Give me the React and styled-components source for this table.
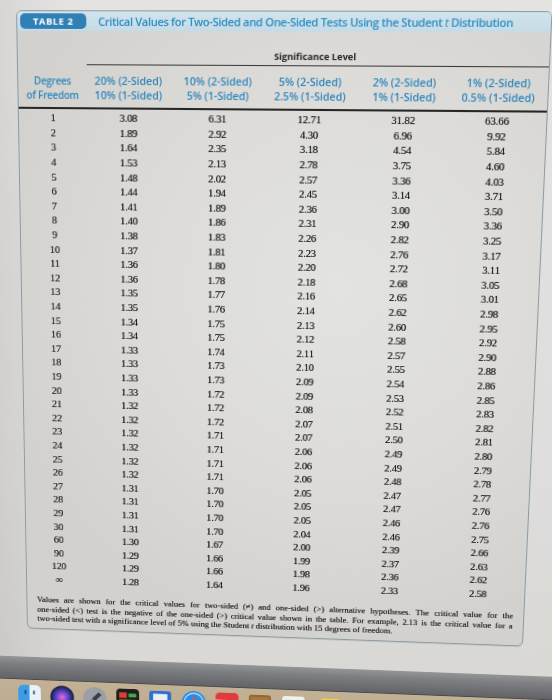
import React from 'react';
import styled, { createGlobalStyle } from 'styled-components';

/* ---------- projective mapping (photo perspective) ---------- */
function adj(m) {
  return [
    m[4] * m[8] - m[5] * m[7], m[2] * m[7] - m[1] * m[8], m[1] * m[5] - m[2] * m[4],
    m[5] * m[6] - m[3] * m[8], m[0] * m[8] - m[2] * m[6], m[2] * m[3] - m[0] * m[5],
    m[3] * m[7] - m[4] * m[6], m[1] * m[6] - m[0] * m[7], m[0] * m[4] - m[1] * m[3],
  ];
}
function mulMM(a, b) {
  const c = [];
  for (let i = 0; i < 3; i++)
    for (let j = 0; j < 3; j++) {
      let s = 0;
      for (let k = 0; k < 3; k++) s += a[3 * i + k] * b[3 * k + j];
      c[3 * i + j] = s;
    }
  return c;
}
function mulMV(m, v) {
  return [
    m[0] * v[0] + m[1] * v[1] + m[2] * v[2],
    m[3] * v[0] + m[4] * v[1] + m[5] * v[2],
    m[6] * v[0] + m[7] * v[1] + m[8] * v[2],
  ];
}
function basis(p) {
  const m = [p[0][0], p[1][0], p[2][0], p[0][1], p[1][1], p[2][1], 1, 1, 1];
  const v = mulMV(adj(m), [p[3][0], p[3][1], 1]);
  return mulMM(m, [v[0], 0, 0, 0, v[1], 0, 0, 0, v[2]]);
}
function homography(src, dst) {
  const t = mulMM(basis(dst), adj(basis(src)));
  const n = t.map((x) => x / t[8]);
  return `matrix3d(${[n[0], n[3], 0, n[6], n[1], n[4], 0, n[7], 0, 0, 1, 0, n[2], n[5], 0, n[8]].join(',')})`;
}

const SRC = [[53, 119.3], [497, 119.3], [53, 542.7], [497, 542.7]];
const DST = [[53, 118.5], [497, 122], [58.5, 527], [480, 540]];
const MATRIX = homography(SRC, DST);
const SHIFT_X = 40;

/* ---------- data ---------- */
const DF = [...Array.from({ length: 30 }, (_, i) => String(i + 1)), '60', '90', '120', '∞'];
const COLS = [
  '3.08 1.89 1.64 1.53 1.48 1.44 1.41 1.40 1.38 1.37 1.36 1.36 1.35 1.35 1.34 1.34 1.33 1.33 1.33 1.33 1.32 1.32 1.32 1.32 1.32 1.32 1.31 1.31 1.31 1.31 1.30 1.29 1.29 1.28',
  '6.31 2.92 2.35 2.13 2.02 1.94 1.89 1.86 1.83 1.81 1.80 1.78 1.77 1.76 1.75 1.75 1.74 1.73 1.73 1.72 1.72 1.72 1.71 1.71 1.71 1.71 1.70 1.70 1.70 1.70 1.67 1.66 1.66 1.64',
  '12.71 4.30 3.18 2.78 2.57 2.45 2.36 2.31 2.26 2.23 2.20 2.18 2.16 2.14 2.13 2.12 2.11 2.10 2.09 2.09 2.08 2.07 2.07 2.06 2.06 2.06 2.05 2.05 2.05 2.04 2.00 1.99 1.98 1.96',
  '31.82 6.96 4.54 3.75 3.36 3.14 3.00 2.90 2.82 2.76 2.72 2.68 2.65 2.62 2.60 2.58 2.57 2.55 2.54 2.53 2.52 2.51 2.50 2.49 2.49 2.48 2.47 2.47 2.46 2.46 2.39 2.37 2.36 2.33',
  '63.66 9.92 5.84 4.60 4.03 3.71 3.50 3.36 3.25 3.17 3.11 3.05 3.01 2.98 2.95 2.92 2.90 2.88 2.86 2.85 2.83 2.82 2.81 2.80 2.79 2.78 2.77 2.76 2.76 2.75 2.66 2.63 2.62 2.58',
].map((s) => s.split(' '));
const HEADS = [
  ['20% (2-Sided)', '10% (1-Sided)'],
  ['10% (2-Sided)', '5% (1-Sided)'],
  ['5% (2-Sided)', '2.5% (1-Sided)'],
  ['2% (2-Sided)', '1% (1-Sided)'],
  ['1% (2-Sided)', '0.5% (1-Sided)'],
];

/* ---------- styles ---------- */
const Global = createGlobalStyle`
  html, body { margin: 0; padding: 0; width: 100%; height: 100%; overflow: hidden; background: #d3d2cf; }
  #root { width: 100%; height: 100%; }
`;

const Frame = styled.div`
  width: 552px;
  height: 700px;
  overflow: hidden;
  background: #d6d5d2;
`;

const Screen = styled.div`
  width: 680px;
  margin-left: -${SHIFT_X}px;
  display: flex;
  flex-direction: column;
  transform-origin: ${SHIFT_X}px 0;
  transform: ${(p) => p.$matrix};
  filter: blur(0.3px);
`;

const Page = styled.div`
  height: 688px;
  box-sizing: border-box;
  padding: 14px 0 0 ${SHIFT_X + 17}px;
  background:
    linear-gradient(90deg, rgba(0,0,0,0.09) 0px, rgba(0,0,0,0.04) 60px, rgba(0,0,0,0) 110px),
    linear-gradient(180deg, #e4e3e1 0%, #dedddb 70%, #d9d8d5 100%);
`;

const Panel = styled.div`
  width: 529px;
  box-sizing: border-box;
  border: 1px solid #8a9ca6;
  border-radius: 6px;
  overflow: hidden;
  background: radial-gradient(ellipse 70% 60% at 62% 42%, #e3e3e0 0%, #dcdbd8 55%, #d2d1cd 100%);
  box-shadow: 0 1px 1px rgba(0, 0, 0, 0.1);
`;

const TitleBar = styled.div`
  height: 19px;
  display: flex;
  align-items: center;
  gap: 12px;
  padding-left: 3px;
  background: linear-gradient(180deg, #d2e3eb 0%, #c5dbe6 100%);
`;

const Pill = styled.div`
  width: 67px;
  height: 15px;
  border-radius: 5px;
  background: #2f80b5;
  color: #fff;
  font: 700 9.5px/15px 'Open Sans', 'Noto Sans', sans-serif;
  letter-spacing: 0.6px;
  text-align: center;
`;

const Title = styled.div`
  color: #2d8ec2;
  font: 600 11.2px/19px 'Open Sans', 'Noto Sans', sans-serif;
  letter-spacing: -0.38px;
  white-space: nowrap;
`;

const Em = styled.span`
  font-style: italic;
  font-weight: 400;
`;

const Head = styled.div`
  padding-top: 18px;
`;

const Spanner = styled.div`
  margin-left: 70px;
  height: 14px;
  border-bottom: 1.5px solid #3a3a3a;
  text-align: center;
  color: #262626;
  font: 700 9.2px/12px 'Open Sans', 'Noto Sans', sans-serif;
`;

const Cols = styled.div`
  display: grid;
  grid-template-columns: 70px 84px 96px 88px 98px 86px;
`;

const HeadRow = styled(Cols)`
  padding: 8px 0 5px;
  border-bottom: 2px solid #262626;
`;

const HeadCell = styled.div`
  display: flex;
  flex-direction: column;
  align-items: center;
  color: #2f87bd;
  font: 600 ${(p) => (p.$narrow ? '10px' : '10.6px')}/14px 'Open Sans', 'Noto Sans', sans-serif;
  letter-spacing: ${(p) => (p.$narrow ? '-0.2px' : '0')};
  white-space: nowrap;
`;

const Body = styled.div`
  padding-top: 1px;
`;

const Row = styled(Cols)`
  height: 14.6px;
  align-items: center;
`;

const Cell = styled.div`
  text-align: center;
  color: ${(p) => (p.$df ? '#2a2a2a' : '#161616')};
  font: 400 10.8px/14px 'Liberation Serif', 'Times New Roman', serif;
  letter-spacing: -0.2px;
  text-shadow: 0 0 0.4px rgba(0, 0, 0, 0.6);
`;

const Foot = styled.div`
  padding: 11px 10.5px 6px 10.5px;
  color: #1a1a1a;
  font: 400 9px/10.4px 'Liberation Serif', 'Times New Roman', serif;
  text-shadow: 0 0 0.3px rgba(0, 0, 0, 0.6);
`;

const FootLine = styled.div`
  text-align: ${(p) => (p.$justify ? 'justify' : 'left')};
  text-align-last: ${(p) => (p.$justify ? 'justify' : 'left')};
  white-space: nowrap;
`;

const Bezel = styled.div`
  height: 25px;
  background: linear-gradient(180deg, #949597 0%, #7d7e81 35%, #626367 100%);
`;

const Dock = styled.div`
  height: 60px;
  display: flex;
  align-items: flex-start;
  gap: 9px;
  padding: 5px 0 0 ${SHIFT_X + 5}px;
  background: linear-gradient(180deg, #c2b194 0%, #b7a688 100%);
  border-top: 1px solid #4a4b4e;
`;

const DockIcon = styled.svg`
  width: 27px;
  height: 27px;
  flex: none;
`;

/* ---------- dock icons ---------- */
const icons = [
  (
    <>
      <rect x="1" y="1" width="24" height="24" rx="5" fill="#e9f2f9" />
      <path d="M6 1h7v24H6a5 5 0 0 1-5-5V6a5 5 0 0 1 5-5z" fill="#3f9be4" />
      <rect x="8" y="7" width="1.6" height="4" fill="#1d3b5a" />
      <rect x="17" y="7" width="1.6" height="4" fill="#1d3b5a" />
    </>
  ),
  (
    <>
      <defs>
        <radialGradient id="siri" cx="50%" cy="50%" r="50%">
          <stop offset="0%" stopColor="#f06bc8" />
          <stop offset="45%" stopColor="#6b48d6" />
          <stop offset="80%" stopColor="#2a2f7a" />
          <stop offset="100%" stopColor="#15162c" />
        </radialGradient>
      </defs>
      <circle cx="13" cy="13" r="12.5" fill="url(#siri)" />
    </>
  ),
  (
    <>
      <circle cx="13" cy="13" r="12.5" fill="#9ba0a6" />
      <path d="M17 6l-7 7 3 3 7-7z" fill="#3a3d42" />
      <path d="M9 14l-3 5 5-3z" fill="#3a3d42" />
    </>
  ),
  (
    <>
      <rect x="1" y="1" width="24" height="24" rx="4" fill="#1e1e1e" />
      <rect x="4" y="5" width="8" height="6" fill="#d8402f" />
      <rect x="14" y="6" width="8" height="4" fill="#3fae4a" />
      <rect x="4" y="13" width="18" height="2" fill="#e3a72f" />
    </>
  ),
  (
    <>
      <rect x="1" y="2" width="23" height="23" rx="3" fill="#2f6fcc" />
      <rect x="5" y="5" width="15" height="10" fill="#e8eef8" />
    </>
  ),
  (
    <>
      <circle cx="13" cy="13" r="12.5" fill="#2a8de4" />
      <circle cx="13" cy="13" r="10" fill="none" stroke="#cfe6fb" strokeWidth="1" />
      <path d="M13 4l2 9h-4z" fill="#e84a3c" />
    </>
  ),
  (
    <>
      <rect x="1" y="1" width="24" height="24" rx="4" fill="#f4f4f4" />
      <path d="M5 1h16a4 4 0 0 1 4 4v4H1V5a4 4 0 0 1 4-4z" fill="#e03a3e" />
    </>
  ),
  (
    <>
      <rect x="1" y="2" width="23" height="23" rx="3" fill="#94652f" />
      <rect x="3" y="4" width="19" height="4" fill="#a8783f" />
    </>
  ),
  (
    <>
      <rect x="1" y="2" width="23" height="23" rx="3" fill="#f1f1ef" />
      <rect x="4" y="6" width="16" height="1.5" fill="#c9c9c9" />
    </>
  ),
  (
    <>
      <rect x="6" y="3" width="20" height="23" rx="3" fill="#f3cd4a" />
    </>
  ),
];

export default function App() {
  return (
    <>
      <Global />
      <Frame>
        <Screen $matrix={MATRIX}>
          <Page>
            <Panel>
              <TitleBar>
                <Pill>TABLE 2</Pill>
                <Title>
                  Critical Values for Two-Sided and One-Sided Tests Using the Student <Em>t</Em> Distribution
                </Title>
              </TitleBar>
              <Head>
                <Spanner>Significance Level</Spanner>
                <HeadRow>
                  <HeadCell $narrow>
                    <span>Degrees</span>
                    <span>of Freedom</span>
                  </HeadCell>
                  {HEADS.map(([a, b]) => (
                    <HeadCell key={a}>
                      <span>{a}</span>
                      <span>{b}</span>
                    </HeadCell>
                  ))}
                </HeadRow>
              </Head>
              <Body>
                {DF.map((d, i) => (
                  <Row key={d}>
                    <Cell $df>{d}</Cell>
                    {COLS.map((c, j) => (
                      <Cell key={j}>{c[i]}</Cell>
                    ))}
                  </Row>
                ))}
              </Body>
              <Foot>
                <FootLine $justify>
                  Values are shown for the critical values for two-sided (≠) and one-sided (&gt;) alternative hypotheses. The critical value for the
                </FootLine>
                <FootLine $justify>
                  one-sided (&lt;) test is the negative of the one-sided (&gt;) critical value shown in the table. For example, 2.13 is the critical value for a
                </FootLine>
                <FootLine>
                  two-sided test with a significance level of 5% using the Student <Em>t</Em> distribution with 15 degrees of freedom.
                </FootLine>
              </Foot>
            </Panel>
          </Page>
          <Bezel />
          <Dock>
            {icons.map((ic, i) => (
              <DockIcon key={i} viewBox="0 0 26 26">
                {ic}
              </DockIcon>
            ))}
          </Dock>
        </Screen>
      </Frame>
    </>
  );
}
